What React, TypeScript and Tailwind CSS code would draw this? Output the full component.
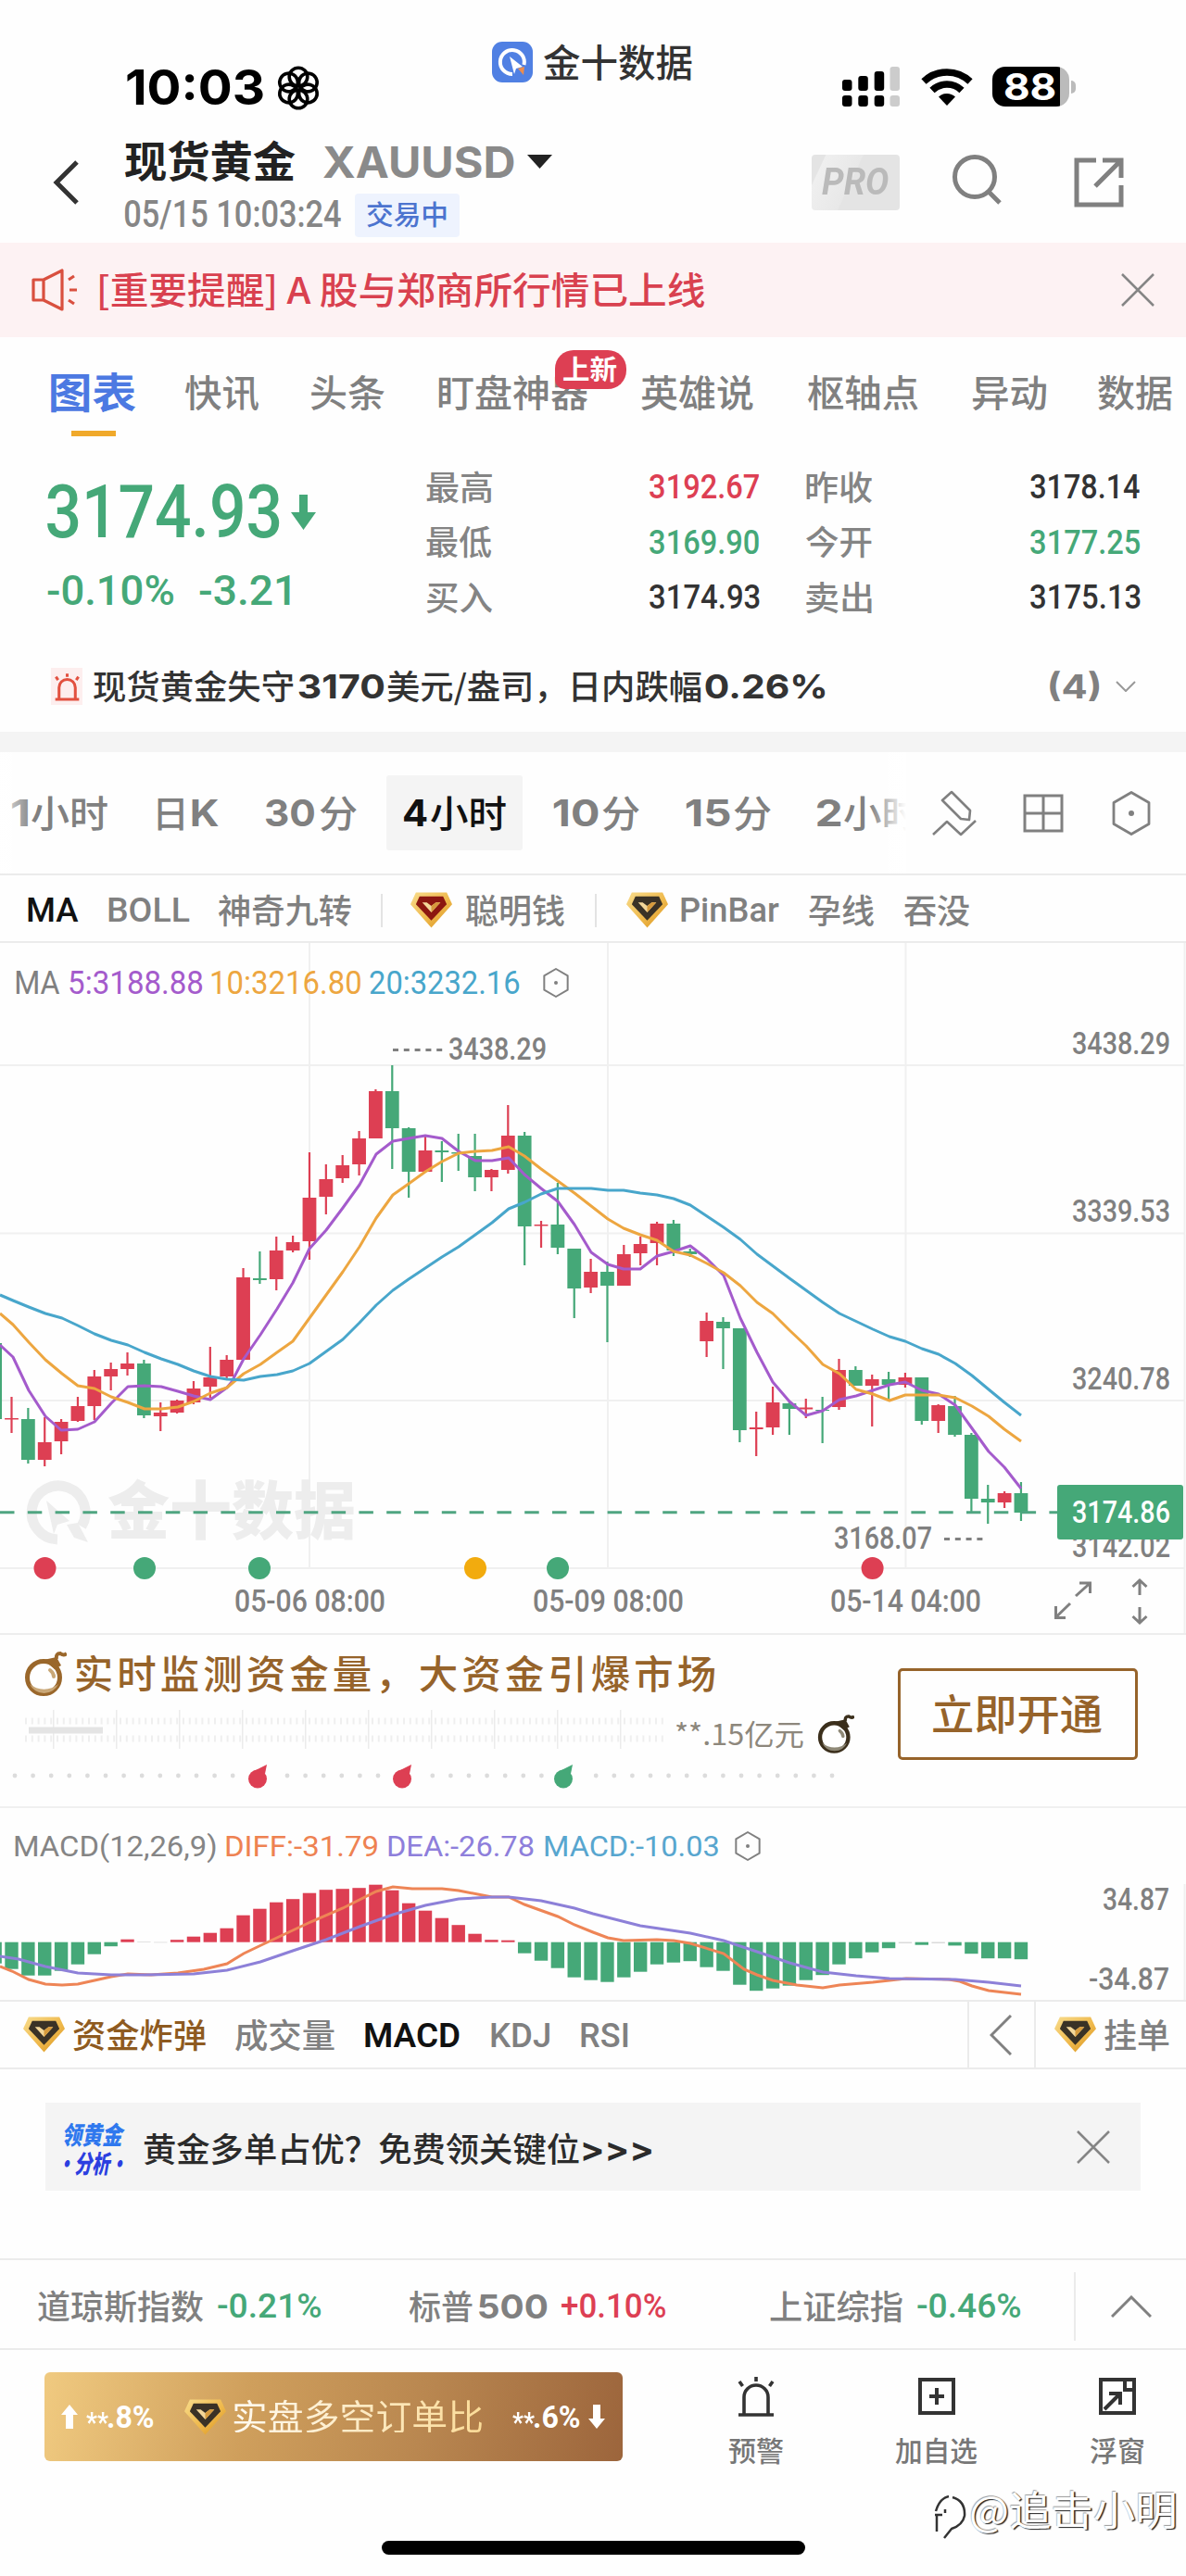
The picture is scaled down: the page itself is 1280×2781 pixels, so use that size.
import React, { useLayoutEffect, useRef } from 'react';

const RED = '#dd3f53';
const GREEN = '#45a878';

const NUM = 'font-[family-name:Roboto,sans-serif]';
const INTER = 'font-[family-name:Inter,sans-serif]';

// Squeezes a single line of text so that its ink fills the width of the box.
const Fit = ({ className = '', inner = '', children }: { className?: string; inner?: string; children: string }) => {
  const box = useRef<HTMLDivElement>(null);
  const text = useRef<HTMLSpanElement>(null);

  useLayoutEffect(() => {
    const el = box.current;
    const span = text.current;
    const ctx = document.createElement('canvas').getContext('2d');
    if (!el || !span || !ctx) return;
    const cs = getComputedStyle(span);
    ctx.font = `${cs.fontStyle} ${cs.fontWeight} ${cs.fontSize} ${cs.fontFamily}`;
    const m = ctx.measureText(children);
    const ratio = span.offsetWidth / m.width;
    const ink = (m.actualBoundingBoxLeft + m.actualBoundingBoxRight) * ratio;
    const scale = el.clientWidth / ink;
    // Noto sits a little low in its line box
    const lift = cs.fontFamily.includes('Noto') ? -0.055 : 0;
    span.style.transform = `translate(${m.actualBoundingBoxLeft * ratio * scale}px, ${lift}em) scaleX(${scale})`;
  }, [children]);

  return (
    <div ref={box} className={`shrink-0 whitespace-nowrap leading-none ${className}`}>
      <span ref={text} className={`inline-block origin-left ${inner}`}>
        {children}
      </span>
    </div>
  );
};

const Gem = ({ className = '', core = '#3a3226' }) => (
  <svg viewBox="0 0 46 39" className={`shrink-0 w-[45px] h-[39px] ${className}`}>
    <defs>
      <linearGradient id="gem" x1="0" y1="0" x2="1" y2="1">
        <stop offset="0" stopColor="#f8dc8c" />
        <stop offset="0.55" stopColor="#efb94c" />
        <stop offset="1" stopColor="#d8921d" />
      </linearGradient>
    </defs>
    <path d="M6 0H40L46 13L23 39L0 13Z" fill="url(#gem)" />
    <path d="M10 4.500H36L40 13L23 31L6 13Z" fill={core} />
    <path d="M13 11H18L23 15L28 11H33L23 22Z" fill="#f3d79a" />
    <path d="M23 22L33 11H28L23 15Z" fill="#d69a3c" />
  </svg>
);

const Hex = ({ className = '', stroke = 2 }) => (
  <svg viewBox="0 0 42 48" className={`shrink-0 ${className}`} fill="none" stroke="#808080">
    <path d="M21 1.500L40 12.500V35.500L21 46.500L2 35.500V12.500Z" strokeWidth={stroke} strokeLinejoin="round" />
    <circle cx="21" cy="24" r="3" fill="#808080" stroke="none" />
  </svg>
);

const Close = ({ className = '' }) => (
  <svg viewBox="0 0 36 36" className={`shrink-0 w-9 h-9 ${className}`} fill="none" stroke="#858585" strokeWidth="2.500">
    <path d="M1 1L35 35M35 1L1 35" />
  </svg>
);

const Siren = ({ className = '', color = '#333', width = 3.6 }) => (
  <svg viewBox="0 0 40 44" className={`shrink-0 ${className}`} fill="none" stroke={color} strokeWidth={width}>
    <path d="M7 41V23a13 13 0 0 1 26 0V41M1 42H39M20 1V6M2 6L5.500 11M38 6L34.500 11" />
  </svg>
);

const Bomb = ({ className = '', color = '#9a672b', shade = '#c9a777' }) => (
  <svg viewBox="0 0 46 50" className={`shrink-0 ${className}`} fill="none">
    <circle cx="21" cy="29" r="17.500" fill="#fff" stroke={color} strokeWidth="5" />
    <path d="M6 36a17 17 0 0 0 31 0a24 24 0 0 1 -31 0Z" fill={shade} />
    <path d="M21 10L35 7L40 16L33 20Z" fill={color} />
    <path d="M35 9q-1 -6 4 -6q4 3 7 0" stroke={color} strokeWidth="4" />
    <path d="M28 21q4 3 4 7" stroke={shade} strokeWidth="4" strokeLinecap="round" />
  </svg>
);

const StatusBar = () => (
  <div className="flex h-[130px] items-start">
    <Fit className={`ml-[137px] mt-[69px] w-[147px] text-[52px] font-bold text-black ${INTER}`}>10:03</Fit>
    <svg viewBox="-24 -24 48 48" className="ml-[14px] mt-[71px] h-12 w-12" fill="none" stroke="#000" strokeWidth="3.600">
      {[0, 60, 120, 180, 240, 300].map((a) => (
        <circle key={a} cx="0" cy="-12" r="9.800" transform={`rotate(${a})`} />
      ))}
    </svg>
    <svg viewBox="0 0 44 44" className="ml-[185px] mt-[45px] h-11 w-11">
      <rect width="44" height="44" rx="11" fill="#5080e3" />
      <path d="M22 35a13 13 0 1 1 12.500 -10" fill="none" stroke="#fff" strokeWidth="4" />
      <path d="M19 16L33 27L26 29L24 35Z" fill="#fff" />
      <path d="M28 29L35 27L34 36Z" fill="#ed8d4d" />
    </svg>
    <Fit className="ml-[12px] mt-[47px] w-[160px] text-[41px] font-medium text-[#333]">金十数据</Fit>
    <svg viewBox="0 0 62 44" className="ml-[162px] mt-[72px] h-11 w-[62px]">
      <rect x="0" y="14" width="10.500" height="12" rx="3" />
      <rect x="17.300" y="10" width="10.500" height="16" rx="3" />
      <rect x="34.700" y="5" width="10.500" height="21" rx="3" />
      <rect x="51.500" y="0" width="10.500" height="26" rx="3" fill="#ccc" />
      <rect x="0" y="31" width="10.500" height="12" rx="3" />
      <rect x="17.300" y="31" width="10.500" height="12" rx="3" />
      <rect x="34.700" y="31" width="10.500" height="12" rx="3" />
      <rect x="51.500" y="31" width="10.500" height="12" rx="3" fill="#ccc" />
    </svg>
    <svg viewBox="0 0 56 41" className="ml-[23px] mt-[73px] h-[41px] w-14" fill="none" stroke="#000" strokeWidth="7.500">
      <path d="M3 15a36 36 0 0 1 50 0" />
      <path d="M12 24.500a23 23 0 0 1 32 0" />
      <path d="M28 41L19 31.500a13 13 0 0 1 18 0Z" fill="#000" stroke="none" />
    </svg>
    <div className="ml-[21px] mt-[72px] flex h-[43px] w-[83px] items-center overflow-hidden rounded-[14px] bg-[linear-gradient(90deg,#000_88%,#bbb_88%)]">
      <Fit className={`ml-[13px] w-[55px] text-[40px] font-bold text-white ${INTER}`}>88</Fit>
    </div>
    <div className="ml-0.5 mt-[87px] h-[14px] w-[5px] rounded-r-full bg-[#bbb]" />
  </div>
);

const TitleBar = () => (
  <div className="flex h-[132px]">
    <svg viewBox="0 0 28 48" className="ml-[57px] mt-[43px] h-12 w-7" fill="none" stroke="#333" strokeWidth="5">
      <path d="M26 2L4 24L26 46" />
    </svg>
    <div className="ml-[50px] mt-4 w-[480px]">
      <div className="flex h-14 items-center">
        <Fit className="w-[184px] text-[46px] font-bold text-[#222]">现货黄金</Fit>
        <Fit className={`ml-[30px] w-[205px] text-[47px] font-bold text-[#8a8a8a] ${INTER}`}>XAUUSD</Fit>
        <svg viewBox="0 0 27 15" className="ml-[15px] h-[15px] w-[27px]">
          <path d="M0 0H27L13.500 15Z" fill="#222" />
        </svg>
      </div>
      <div className="flex h-[58px] items-center pt-0.5">
        <Fit className={`w-[233px] text-[40px] font-medium text-[#868686] ${NUM}`}>05/15 10:03:24</Fit>
        <div className="ml-[15px] flex h-[47px] w-[113px] items-center rounded-[4px] bg-[#eef3fe]">
          <Fit className="ml-[13px] w-[86px] text-[29px] font-medium text-[#4c74cf]">交易中</Fit>
        </div>
      </div>
    </div>
    <div className="ml-[261px] mt-[37px] flex h-[60px] w-[95px] items-center rounded-[4px] bg-[linear-gradient(115deg,#e4e4e4_12%,#efefef_13%,#e8e8e8_45%,#e4e4e4_46%)]">
      <Fit className={`ml-[11px] w-[72px] text-[40px] font-bold italic text-[#bababa] ${NUM}`}>PRO</Fit>
    </div>
    <svg viewBox="0 0 54 54" className="ml-[56px] mt-[37px] h-[54px] w-[54px]" fill="none" stroke="#808080" strokeWidth="5">
      <circle cx="25" cy="24" r="21.500" />
      <path d="M40 40L52 52" />
    </svg>
    <svg viewBox="0 0 54 54" className="ml-[78px] mt-10 h-[54px] w-[54px]" fill="none" stroke="#808080" strokeWidth="5">
      <path d="M24 3H3V51H51V30M31 3H51V22M50 4L23 31" />
    </svg>
  </div>
);

const Notice = () => (
  <div className="flex h-[102px] items-center bg-[#fdf2f3] pb-1 pt-1">
    <svg viewBox="0 0 50 46" className="ml-[34px] h-[46px] w-[50px]" fill="none" stroke="#d9503f" strokeWidth="3.200">
      <path d="M2 12H13V34H2ZM13 12L33 2V44L13 34" strokeLinejoin="round" />
      <path d="M40 12L46 8M41 23H49M40 34L46 38" />
    </svg>
    <Fit className="ml-6 w-[652px] text-[40px] font-medium text-[#d9414f]">[重要提醒] A 股与郑商所行情已上线</Fit>
    <Close className="ml-[450px]" />
  </div>
);

const TABS = [
  ['快讯', 'ml-[53px] w-20'],
  ['头条', 'ml-[56px] w-20'],
  ['盯盘神器', 'ml-[58px] w-[162px]'],
  ['英雄说', 'ml-[57px] w-[121px]'],
  ['枢轴点', 'ml-[58px] w-[120px]'],
  ['异动', 'ml-[58px] w-20'],
  ['数据', 'ml-[56px] w-20'],
];

const Tabs = () => (
  <div className="relative h-[112px]">
    <div className="flex h-[101px] items-center pt-[18px]">
      <Fit className="ml-[55px] w-[91px] text-[45px] font-bold text-[#4c79e2]">图表</Fit>
      {TABS.map(([name, cls]) => (
        <Fit key={name} className={`text-[40px] font-medium text-[#808080] ${cls}`}>
          {name}
        </Fit>
      ))}
    </div>
    <div className="ml-[77px] h-1.5 w-12 bg-[#f0a92b]" />
    <div className="absolute left-[599px] top-[14px] flex h-[42px] w-[77px] items-center rounded-t-[20px] rounded-br-[20px] rounded-bl-[10px] bg-[#dd3f53]">
      <Fit className="ml-[9px] w-[58px] text-[29px] font-bold text-white">上新</Fit>
    </div>
  </div>
);

const QUOTES = [
  { a: '最高', av: '3192.67', ac: 'text-[#dd3f53]', b: '昨收', bv: '3178.14', bc: 'text-[#333]' },
  { a: '最低', av: '3169.90', ac: 'text-[#45a878]', b: '今开', bv: '3177.25', bc: 'text-[#45a878]' },
  { a: '买入', av: '3174.93', ac: 'text-[#333]', b: '卖出', bv: '3175.13', bc: 'text-[#333]' },
];

const Quote = () => (
  <div className="flex h-[222px] pt-5">
    <div className="ml-[51px] w-[409px]">
      <div className="flex h-[114px] items-center">
        <Fit className={`w-[251px] text-[80px] font-medium text-[#45a878] ${NUM}`}>3174.93</Fit>
        <svg viewBox="0 0 27 38" className="ml-3 h-[38px] w-[27px]" fill={GREEN}>
          <path d="M9 0H18V19H27L13.500 38L0 19H9Z" />
        </svg>
      </div>
      <div className={`flex h-[54px] items-center font-medium text-[#45a878] ${NUM}`}>
        <Fit className="w-[137px] text-[45px]">-0.10%</Fit>
        <Fit className="ml-[27px] w-[98px] text-[45px]">-3.21</Fit>
      </div>
    </div>
    <div>
      {QUOTES.map((q) => (
        <div key={q.a} className="flex h-[59.6px] items-center font-medium">
          <Fit className="w-[71px] text-[36px] text-[#848484]">{q.a}</Fit>
          <Fit className={`ml-[170px] w-[118px] text-[37px] ${NUM} ${q.ac}`}>{q.av}</Fit>
          <Fit className="ml-[51px] w-[71px] text-[36px] text-[#848484]">{q.b}</Fit>
          <Fit className={`ml-[171px] w-[118px] text-[37px] ${NUM} ${q.bc}`}>{q.bv}</Fit>
        </div>
      ))}
    </div>
  </div>
);

const NewsLine = () => (
  <div className="flex h-[92px] items-center pb-1.5 text-[36px] font-medium text-[#333]">
    <div className="ml-[55px] flex h-10 w-[34px] items-center justify-center bg-[#fdeeee]">
      <Siren className="h-[31px] w-[27px]" color="#e2503f" width={4.5} />
    </div>
    <Fit className="ml-3 w-[216px]">现货黄金失守</Fit>
    <Fit className={`ml-[5px] w-[92px] font-bold ${INTER}`}>3170</Fit>
    <Fit className="ml-1 w-[339px]">美元/盎司，日内跌幅</Fit>
    <Fit className={`ml-1 w-[130px] font-bold ${INTER}`}>0.26%</Fit>
    <Fit className={`ml-[241px] w-[55px] font-bold text-[#808080] ${INTER}`}>(4)</Fit>
    <svg viewBox="0 0 22 12" className="ml-[17px] h-3 w-[22px]" fill="none" stroke="#999" strokeWidth="2">
      <path d="M1 1L11 11L21 1" />
    </svg>
  </div>
);

const Periods = () => (
  <div className="flex h-[131px] items-center text-[40px] text-[#808080]">
    <div className="relative flex h-full w-[978px] shrink-0 items-center overflow-hidden">
      <Fit className={`ml-[12px] w-[18px] font-bold ${INTER}`}>1</Fit>
      <Fit className="ml-1 w-[82px] font-medium">小时</Fit>
      <Fit className="ml-[54px] w-[28px] font-medium">日</Fit>
      <Fit className={`ml-[9px] w-[29px] font-bold ${INTER}`}>K</Fit>
      <Fit className={`ml-[50px] w-[54px] font-bold ${INTER}`}>30</Fit>
      <Fit className="ml-[5px] w-10 font-medium">分</Fit>
      <div className="ml-[32px] flex h-[81px] w-[147px] shrink-0 items-center rounded-[3px] bg-[#f4f4f4] text-[#111]">
        <Fit className={`ml-[18px] w-[26px] font-bold ${INTER}`}>4</Fit>
        <Fit className="ml-[4px] w-[81px] font-medium">小时</Fit>
      </div>
      <Fit className={`ml-[33px] w-[49px] font-bold ${INTER}`}>10</Fit>
      <Fit className="ml-1 w-10 font-medium">分</Fit>
      <Fit className={`ml-[50px] w-[48px] font-bold ${INTER}`}>15</Fit>
      <Fit className="ml-1 w-10 font-medium">分</Fit>
      <Fit className={`ml-[50px] w-[25px] font-bold ${INTER}`}>2</Fit>
      <Fit className="ml-1 w-[81px] font-medium">小时</Fit>
      <div className="absolute left-0 top-0 h-full w-9 bg-gradient-to-r from-white/80 to-transparent" />
      <div className="absolute right-0 top-0 h-full w-10 bg-gradient-to-l from-white to-transparent" />
    </div>
    <svg viewBox="0 0 48 50" className="ml-7 h-[50px] w-12" fill="none" stroke="#808080" strokeWidth="2.600">
      <path d="M21 2L41 22L40 32L31 31L11 11ZM1 48L16 34L31 48L47 33" strokeLinejoin="round" />
    </svg>
    <svg viewBox="0 0 44 42" className="ml-[50px] h-[42px] w-11" fill="none" stroke="#808080" strokeWidth="3">
      <path d="M2 2H42V40H2ZM22 2V40M2 21H42" />
    </svg>
    <Hex className="ml-[52px] h-12 w-[42px]" stroke={2.8} />
  </div>
);

const Overlays = () => (
  <div className="flex h-[75px] items-center border-y-2 border-[#ebebeb] pt-1 text-[36px] font-medium text-[#808080]">
    <Fit className={`ml-[30px] w-[55px] text-[#111] ${NUM}`}>MA</Fit>
    <Fit className={`ml-8 w-[87px] ${NUM}`}>BOLL</Fit>
    <Fit className="ml-[31px] w-[144px]">神奇九转</Fit>
    <div className="ml-8 h-9 w-0.5 bg-[#e3e3e3]" />
    <Gem className="ml-[30px]" core="#8c1710" />
    <Fit className="ml-[15px] w-[106px]">聪明钱</Fit>
    <div className="ml-[33px] h-9 w-0.5 bg-[#e3e3e3]" />
    <Gem className="ml-[32px]" />
    <Fit className={`ml-[14px] w-[106px] ${NUM}`}>PinBar</Fit>
    <Fit className="ml-8 w-[70px]">孕线</Fit>
    <Fit className="ml-[33px] w-[70px]">吞没</Fit>
  </div>
);

const STEP = 17.86;
const FIRST = 12.5;
const cx = (i: number) => FIRST + i * STEP;

// direction, high, low, body top, body bottom
type Candle = [string, number, number, number, number];
const CANDLES: Candle[] = [
  ['d', 1450, 1532, 1450, 1532],
  ['u', 1508, 1547, 1531, 1532.5],
  ['d', 1520, 1580, 1532, 1576],
  ['u', 1530, 1583, 1557, 1576],
  ['u', 1532, 1570, 1535, 1556],
  ['u', 1508, 1535, 1518, 1534],
  ['u', 1479, 1533, 1486, 1518],
  ['u', 1471, 1501, 1478, 1486],
  ['u', 1460, 1485, 1472, 1478],
  ['d', 1468, 1531, 1472, 1528],
  ['u', 1514, 1545, 1525, 1529],
  ['u', 1511, 1526, 1512, 1525],
  ['u', 1491, 1516, 1499, 1514],
  ['u', 1454, 1509, 1487, 1497],
  ['u', 1463, 1488, 1468, 1486],
  ['u', 1369, 1468, 1379, 1468],
  ['d', 1351, 1386, 1380, 1382],
  ['u', 1335, 1393, 1350, 1381],
  ['u', 1334, 1352, 1341, 1350],
  ['u', 1244, 1360, 1293, 1340],
  ['u', 1257, 1311, 1273, 1292],
  ['u', 1247, 1277, 1258, 1272],
  ['u', 1221, 1269, 1229, 1257],
  ['u', 1176, 1229, 1178, 1229],
  ['d', 1150, 1262, 1178, 1218],
  ['d', 1217, 1293, 1218, 1265],
  ['u', 1226, 1265, 1242, 1265],
  ['d', 1232, 1276, 1242, 1244],
  ['d', 1224, 1264, 1244, 1245.5],
  ['d', 1224, 1286, 1248, 1271],
  ['u', 1262, 1286, 1263, 1271],
  ['u', 1193, 1267, 1226, 1263],
  ['d', 1222, 1366, 1226, 1324],
  ['u', 1318, 1347, 1322, 1323.5],
  ['d', 1277, 1354, 1322, 1347],
  ['d', 1348, 1423, 1348, 1391],
  ['u', 1359, 1396, 1373, 1390],
  ['d', 1362, 1449, 1373, 1388],
  ['u', 1344, 1388, 1354, 1388],
  ['u', 1335, 1366, 1343, 1353],
  ['u', 1319, 1366, 1321, 1342],
  ['d', 1317, 1356, 1321, 1350],
  ['d', 1348, 1357, 1351, 1354],
  ['u', 1417, 1465, 1426, 1448],
  ['d', 1422, 1478, 1427, 1434],
  ['d', 1434, 1557, 1434, 1544],
  ['u', 1524, 1572, 1541, 1543],
  ['u', 1497, 1549, 1514, 1541],
  ['d', 1513, 1549, 1515, 1521],
  ['u', 1510, 1531, 1519.5, 1521.5],
  ['d', 1508, 1558, 1522, 1523],
  ['u', 1467, 1522, 1479, 1519],
  ['d', 1475, 1496, 1479, 1496],
  ['u', 1484, 1540, 1489, 1496],
  ['d', 1481, 1512, 1489, 1495],
  ['u', 1482, 1498, 1487, 1495],
  ['d', 1487, 1538, 1487, 1534],
  ['u', 1516, 1547, 1517, 1534],
  ['d', 1507, 1551, 1518, 1549],
  ['d', 1547, 1633, 1549, 1618],
  ['d', 1603, 1645, 1618, 1622],
  ['u', 1610, 1628, 1612, 1622],
  ['d', 1600, 1642, 1612, 1633],
];

const MA5 =
  '0,1452 14,1465 31,1501 49,1529 66,1544 84,1543 102,1535 120,1515 138,1497 156,1496 174,1497 192,1502 209,1507 227,1511 245,1498 250,1492 263,1467 281,1441 299,1413 316,1385 334,1348 352,1328 370,1304 388,1279 406,1246 424,1232 441,1229 459,1226 477,1229 495,1243 513,1253 531,1253 549,1250 566,1268 584,1283 602,1297 620,1322 638,1352 656,1365 673,1370 691,1370 709,1356 727,1351 745,1345 763,1359 781,1377 799,1423 817,1460 834,1492 852,1513 870,1528 888,1523 906,1511 924,1507 942,1501 960,1495 977,1492 995,1501 1013,1505 1031,1517 1049,1542 1067,1567 1084,1584 1102,1607';
const MA10 =
  '0,1418 14,1430 31,1449 49,1468 67,1483 84,1496 102,1499 120,1508 138,1514 156,1521 174,1521 192,1519 209,1513 227,1504 245,1498 263,1483 281,1473 299,1460 316,1448 334,1423 352,1398 370,1373 388,1346 406,1315 424,1290 441,1278 459,1265 477,1254 495,1245 513,1243 531,1242 549,1238 566,1248 584,1262 602,1275 620,1288 638,1302 656,1316 673,1326 691,1333 709,1339 727,1351 745,1355 763,1364 781,1374 799,1388 817,1406 834,1418 852,1436 870,1453 888,1473 906,1483 924,1500 942,1505 960,1512 977,1506 995,1506 1013,1506 1031,1509 1049,1518 1067,1529 1084,1543 1102,1556';
const MA20 =
  '0,1398 14,1404 31,1411 49,1418 67,1423 84,1431 102,1440 120,1447 138,1452 156,1460 174,1467 192,1473 209,1480 227,1486 245,1489 263,1490 281,1486 299,1484 316,1480 334,1472 352,1459 370,1446 388,1428 406,1409 424,1393 441,1381 459,1369 477,1357 495,1346 513,1333 531,1320 549,1305 566,1298 584,1289 602,1283 638,1283 656,1285 673,1285 691,1288 709,1290 727,1294 745,1301 763,1313 781,1325 799,1338 817,1354 852,1380 888,1406 906,1418 942,1435 960,1443 977,1448 995,1456 1013,1462 1031,1472 1049,1485 1067,1500 1084,1514 1102,1528';

const EVENTS: [number, string][] = [
  [48.5, RED],
  [156, GREEN],
  [280, GREEN],
  [513, '#f2ab0e'],
  [602, GREEN],
  [941.6, RED],
];

const Label = ({ x, y, w, fill = '#808080', children }: { x: number; y: number; w: number; fill?: string; children: string }) => (
  <text x={x - 1} y={y} textLength={w + 2} lengthAdjust="spacingAndGlyphs" fill={fill} className={`text-[33px] font-medium ${NUM}`}>
    {children}
  </text>
);

const PriceChart = () => (
  <div className="relative h-[747px] border-b-2 border-[#ededed]">
    <svg viewBox="0 1018 1280 745" className="block h-[745px] w-[1280px]">
      <g stroke="#f0f0f0" strokeWidth="2">
        <path d="M334 1018V1693M656 1018V1693M977.500 1018V1693M1278.500 1018V1763M0 1150H1278M0 1331.500H1278M0 1512H1278M0 1693H1278" />
      </g>
      <g fill="none" stroke="#ededed">
        <path d="M62 1662a29 29 0 1 1 26 -14" strokeWidth="11" />
        <path d="M50 1620L75 1642L62 1646L58 1656ZM72 1646L84 1644L95 1665L80 1660Z" fill="#ededed" stroke="none" />
      </g>
      <text x="116" y="1656" textLength="268" lengthAdjust="spacingAndGlyphs" fill="#ededed" className="text-[68px] font-black">
        金十数据
      </text>
      {CANDLES.map(([dir, high, low, top, bottom], i) => (
        <g key={i} fill={dir === 'u' ? RED : GREEN}>
          <rect x={cx(i - 1) - 1.1} y={high} width="2.200" height={low - high} />
          <rect x={cx(i - 1) - 7.4} y={top} width="14.800" height={bottom - top} />
        </g>
      ))}
      <g fill="none" strokeWidth="3" strokeLinejoin="round">
        <polyline points={MA5} stroke="#a45bcc" />
        <polyline points={MA10} stroke="#eda640" />
        <polyline points={MA20} stroke="#48a6cb" />
      </g>
      <path d="M0 1632.700H1142" stroke="#4fa581" strokeWidth="3" strokeDasharray="15.500 14.300" />
      <path d="M424 1133.500H478" stroke="#808080" strokeWidth="3" strokeDasharray="6 5.800" />
      <Label x={485} y={1144} w={104}>3438.29</Label>
      <path d="M1019 1661.500H1061" stroke="#808080" strokeWidth="3" strokeDasharray="6 5.800" />
      <Label x={901} y={1672} w={104}>3168.07</Label>
      <Label x={1158} y={1138} w={104}>3438.29</Label>
      <Label x={1158} y={1319} w={104}>3339.53</Label>
      <Label x={1158} y={1500} w={104}>3240.78</Label>
      <Label x={1158} y={1681} w={104}>3142.02</Label>
      <rect x="1141" y="1603" width="136" height="59" rx="3" fill={GREEN} />
      <Label x={1158} y={1643.5} w={104} fill="#fff">3174.86</Label>
      {EVENTS.map(([x, fill]) => (
        <circle key={x} cx={x} cy="1693" r="12" fill={fill} />
      ))}
      <Label x={254} y={1740} w={161}>05-06 08:00</Label>
      <Label x={576} y={1740} w={161}>05-09 08:00</Label>
      <Label x={897} y={1740} w={161}>05-14 04:00</Label>
      <g fill="none" stroke="#808080" strokeWidth="3">
        <path d="M1161 1723L1176 1709.500M1165 1709H1176.500V1720M1155 1731L1139.500 1746M1139.500 1734V1746.500H1150" />
        <path d="M1230 1722V1706M1222.500 1713L1230 1706L1237.500 1713M1230 1735V1752M1222.500 1745L1230 1752L1237.500 1745" />
      </g>
    </svg>
    <div className={`absolute left-0 top-0 flex h-[86px] items-center text-[35px] ${NUM}`}>
      <Fit className="ml-[17px] w-12 text-[#808080]">MA</Fit>
      <Fit className="ml-[10px] w-[143px] text-[#a45bcc]">5:3188.88</Fit>
      <Fit className="ml-[10px] w-[161px] text-[#eda640]">10:3216.80</Fit>
      <Fit className="ml-[10px] w-[161px] text-[#48a6cb]">20:3232.16</Fit>
      <Hex className="ml-[26px] h-8 w-7" stroke={3} />
    </div>
  </div>
);

const MiniBomb = ({ x, fill }: { x: number; fill: string }) => (
  <g fill={fill}>
    <ellipse cx={x} cy="79.500" rx="10" ry="10" />
    <path d={`M${x - 2} 70L${x + 4} 67L${x + 10} 64L${x + 8} 74Z`} />
  </g>
);

const Promo = () => (
  <div className="flex h-[187px] border-b-2 border-[#f0f0f0]">
    <div className="w-[969px]">
      <div className="flex h-[76px] items-center pt-[7px]">
        <Bomb className="ml-[26px] h-[50px] w-[46px]" />
        <Fit className="ml-[10px] w-[693px] text-[42px] font-medium text-[#96632a]" inner="tracking-[4px]">
          实时监测资金量，大资金引爆市场
        </Fit>
      </div>
      <div className="relative h-[100px]">
        <svg viewBox="0 0 969 100" className="block h-[100px] w-[969px]">
          <path d="M27 17H716M27 36H716" stroke="#efefef" strokeWidth="7" strokeDasharray="2 4.800" />
          <path d="M57 26H716" stroke="#ebebeb" strokeWidth="42" strokeDasharray="1.500 66.500" />
          <path d="M31 27H111" stroke="#e4e4e4" strokeWidth="7" />
          {Array.from({ length: 46 }, (_, i) => (
            <circle key={i} cx={16 + i * 19.6} cy="76" r="2.400" fill="#dcdcdc" />
          ))}
          <path d="M262 76H300M418 76H456M592 76H630" stroke="#fefefe" strokeWidth="8" />
          <MiniBomb x={278} fill={RED} />
          <MiniBomb x={434} fill={RED} />
          <MiniBomb x={608} fill={GREEN} />
        </svg>
        <div className="absolute left-[730px] top-[8px] flex h-[46px] items-center">
          <Fit className="w-[137px] text-[31px] text-[#8d877c]">**.15亿元</Fit>
          <Bomb className="ml-[15px] h-11 w-[40px]" color="#3b2f1c" shade="#8f8977" />
        </div>
      </div>
    </div>
    <div className="mt-9 flex h-[99px] w-[259px] items-center rounded-[5px] border-[3px] border-[#96632a]">
      <Fit className="ml-[35px] w-[182px] text-[45px] font-medium text-[#96632a]">立即开通</Fit>
    </div>
  </div>
);

const MACD = [
  -23, -29, -36, -36, -31, -24, -13, -4.5, 3, 0.5, -0.5, 2.5, 6, 10, 15, 29, 36, 43, 46.5, 53, 56.5, 57.5, 58.5, 62, 56, 42, 34, 26, 18.5,
  9, 2.5, 2, -12, -20, -28, -38, -41, -43, -38, -32, -24, -22, -20.5, -27, -31, -46, -52.5, -50, -47, -41, -35.5, -24, -17.5, -11, -6.5, -1, -3,
  -1, -3.7, -12.5, -17.5, -17.5, -18.5,
];

const DIFF =
  '0,2123 13,2128 31,2137 49,2142 67,2143 84,2142 102,2138 120,2134 138,2131 163,2132 192,2130 220,2126 245,2120 263,2109 286,2098 335,2075 370,2060 406,2042 424,2037 445,2039 477,2039 495,2041 531,2048 549,2048 566,2056 602,2069 620,2078 640,2086 656,2092 673,2095 709,2094 727,2095 745,2098 781,2109 803,2126 817,2132 834,2138 860,2143 888,2146 906,2143 942,2140 978,2136 1024,2137 1036,2139 1049,2144 1067,2149 1102,2153';
const DEA =
  '0,2112 20,2115 49,2123 84,2130 120,2132 156,2132 209,2131 245,2127 281,2118 316,2106 352,2094 388,2080 424,2067 459,2057 495,2050 531,2048 549,2048 584,2052 620,2060 640,2066 691,2079 745,2087 781,2095 817,2107 852,2119 888,2129 924,2133 960,2136 1031,2137 1067,2140 1102,2144';

const MacdChart = () => (
  <div className="h-[207px]">
    <div className={`flex h-[82px] items-center text-[32px] ${NUM}`}>
      <Fit className="ml-4 w-[216px] text-[#858585]">MACD(12,26,9)</Fit>
      <Fit className="ml-[12px] w-[163px] text-[#ee8252]">DIFF:-31.79</Fit>
      <Fit className="ml-[12px] w-[157px] text-[#8e7fdb]">DEA:-26.78</Fit>
      <Fit className="ml-[12px] w-[187px] text-[#58a6cf]">MACD:-10.03</Fit>
      <Hex className="ml-[18px] h-8 w-7" stroke={3} />
    </div>
    <svg viewBox="0 2034 1280 125" className="block h-[125px] w-[1280px] overflow-visible">
      <path d="M1278.500 2034V2159" stroke="#f0f0f0" strokeWidth="2" />
      {MACD.map((v, i) => (
        <rect
          key={i}
          x={cx(i - 1) - 7.2}
          y={v > 0 ? 2096.7 - v : 2096.7}
          width="14.400"
          height={Math.abs(v)}
          fill={Math.abs(v) <= 1 ? '#c9c9c9' : v > 0 ? RED : GREEN}
        />
      ))}
      <polyline points={DIFF} fill="none" stroke="#ee8556" strokeWidth="3" />
      <polyline points={DEA} fill="none" stroke="#8d80d8" strokeWidth="3" />
      <Label x={1191} y={2062} w={70}>34.87</Label>
      <Label x={1176} y={2148} w={85}>-34.87</Label>
    </svg>
  </div>
);

const SubTabs = () => (
  <div className="flex h-[75px] items-center border-y-2 border-[#ebebeb] text-[36px] font-medium text-[#808080]">
    <Gem className="ml-[25px]" />
    <Fit className="ml-[9px] w-[143px] text-[#8e5a20]">资金炸弹</Fit>
    <Fit className="ml-8 w-[107px]">成交量</Fit>
    <Fit className={`ml-[33px] w-[102px] pt-0.5 font-semibold text-[#111] ${NUM}`}>MACD</Fit>
    <Fit className={`ml-[34px] w-[63px] pt-0.5 ${NUM}`}>KDJ</Fit>
    <Fit className={`ml-[34px] w-[51px] pt-0.5 ${NUM}`}>RSI</Fit>
    <div className="ml-[366px] flex h-full w-[74px] items-center border-x-2 border-[#ebebeb]">
      <svg viewBox="0 0 24 44" className="ml-[22px] h-11 w-6" fill="none" stroke="#808080" strokeWidth="3">
        <path d="M23 1L2 22L23 43" />
      </svg>
    </div>
    <Gem className="ml-[20px]" />
    <Fit className="ml-[9px] w-[70px]">挂单</Fit>
  </div>
);

const Ad = () => (
  <div className="ml-[49px] mt-[36px] flex h-[95px] w-[1182px] items-center bg-[#f4f4f4]">
    <div className="ml-5 w-[66px] pt-1 font-black italic">
      <Fit className="w-[66px] pb-[4px] text-[27px] text-[#2f78ee]">领黄金</Fit>
      <Fit className="w-[64px] text-[27px] text-[#2b3fe0]">·分析·</Fit>
    </div>
    <Fit className="ml-[20px] w-[470px] pt-1 text-[36px] font-medium text-[#2b2b2b]">黄金多单占优？免费领关键位</Fit>
    <Fit className={`ml-1 w-[74px] pt-1 text-[36px] font-bold text-[#2b2b2b] ${INTER}`}>&gt;&gt;&gt;</Fit>
    <Close className="ml-[459px]" />
  </div>
);

const IndexBar = () => (
  <div className="mt-[73px] flex h-[99px] items-center border-y-2 border-[#ebebeb] pt-1 text-[36px] font-medium text-[#808080]">
    <Fit className="ml-[41px] w-[179px]">道琼斯指数</Fit>
    <Fit className={`ml-[15px] w-[111px] text-[#45a878] ${NUM}`}>-0.21%</Fit>
    <Fit className="ml-[95px] w-[69px]">标普</Fit>
    <Fit className={`ml-[7px] w-[74px] font-bold ${INTER}`}>500</Fit>
    <Fit className={`ml-[15px] w-[112px] text-[#dd3f53] ${NUM}`}>+0.10%</Fit>
    <Fit className="ml-[113px] w-[143px]">上证综指</Fit>
    <Fit className={`ml-4 w-[111px] text-[#45a878] ${NUM}`}>-0.46%</Fit>
    <div className="ml-[58px] h-[74px] w-0.5 bg-[#ebebeb]" />
    <svg viewBox="0 0 44 24" className="ml-[38px] h-6 w-11" fill="none" stroke="#808080" strokeWidth="3">
      <path d="M1 23L22 2L43 23" />
    </svg>
  </div>
);

const BottomBar = () => (
  <div className="flex">
    <div className="ml-12 mt-[24px] flex h-[96px] w-[624px] items-center rounded-[6px] bg-[linear-gradient(100deg,#f0ca80_0%,#cf9f5c_35%,#b98750_65%,#9c653c_100%)] text-white">
      <svg viewBox="0 0 18 26" className="ml-[18px] h-[26px] w-[18px]" fill="#fff">
        <path d="M9 0L18 11H13V26H5V11H0Z" />
      </svg>
      <div className="ml-[9px] flex w-[73px] items-center">
        <Fit className={`w-[24px] pt-[11px] text-[30px] font-bold ${NUM}`}>**</Fit>
        <Fit className={`w-[49px] text-[34px] font-bold ${NUM}`}>.8%</Fit>
      </div>
      <Gem className="ml-[33px]" />
      <Fit
        className="ml-[8px] w-[268px] text-[38px]"
        inner="bg-gradient-to-r from-[#fffaf0] to-[#fbdc98] bg-clip-text text-transparent"
      >
        实盘多空订单比
      </Fit>
      <div className="ml-[33px] flex w-[73px] items-center">
        <Fit className={`w-[24px] pt-[11px] text-[30px] font-bold ${NUM}`}>**</Fit>
        <Fit className={`w-[49px] text-[34px] font-bold ${NUM}`}>.6%</Fit>
      </div>
      <svg viewBox="0 0 18 26" className="ml-[9px] h-[26px] w-[18px]" fill="#fff">
        <path d="M9 26L18 15H13V0H5V15H0Z" />
      </svg>
    </div>
    <div className="ml-[114px] mt-[28px] flex w-[59px] flex-col items-center">
      <Siren className="h-11 w-10" />
      <Fit className="mt-[22px] w-[59px] text-[30px] font-medium text-[#777]">预警</Fit>
    </div>
    <div className="ml-[121px] mt-[30px] flex w-[89px] flex-col items-center">
      <svg viewBox="0 0 40 40" className="h-10 w-10" fill="none" stroke="#333" strokeWidth="4">
        <path d="M2 2H38V38H2ZM20 11V29M12 20H28" />
      </svg>
      <Fit className="mt-6 w-[89px] text-[30px] font-medium text-[#777]">加自选</Fit>
    </div>
    <div className="ml-[121px] mt-[30px] flex w-[59px] flex-col items-center">
      <svg viewBox="0 0 40 40" className="h-10 w-10" fill="none" stroke="#333" strokeWidth="4">
        <path d="M2 2H38V38H2ZM28 2V13H38M6 34L22 18M11 17H23V29" />
      </svg>
      <Fit className="mt-6 w-[59px] text-[30px] font-medium text-[#777]">浮窗</Fit>
    </div>
  </div>
);

const App = () => {
  return (
    <div className="relative h-[2781px] w-[1280px] overflow-hidden bg-[#fefefe] font-[family-name:'Noto_Sans_CJK_SC',sans-serif]">
      <StatusBar />
      <TitleBar />
      <Notice />
      <Tabs />
      <Quote />
      <NewsLine />
      <div className="h-[22px] bg-[#f4f4f4]" />
      <Periods />
      <Overlays />
      <PriceChart />
      <Promo />
      <MacdChart />
      <SubTabs />
      <Ad />
      <IndexBar />
      <BottomBar />

      {/* Author mark */}
      <div className="absolute left-[1006px] top-[2682px] flex h-14 items-center text-[44px] text-white [text-shadow:1.5px_1.5px_1px_#222,-0.5px_-0.5px_1px_#999]">
        <svg viewBox="0 0 38 50" className="mt-3 h-[50px] w-[38px]" fill="none" stroke="#333" strokeWidth="2.500">
          <path d="M4 20q4 -14 14 -16M3 24h8M5 24v18M14 18v4M22 5q14 4 13 20q-2 10 -14 14l-8 10" />
        </svg>
        <Fit className="ml-[4px] w-[220px]">@追击小明</Fit>
      </div>

      {/* Home indicator */}
      <div className="absolute left-[412px] top-[2743px] h-[15px] w-[457px] rounded-full bg-black" />
    </div>
  );
};

export default App;
